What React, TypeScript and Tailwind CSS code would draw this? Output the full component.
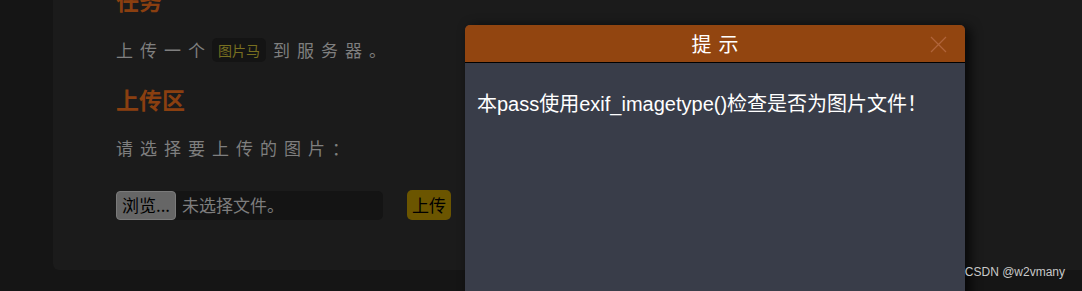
import React from "react";

const cjk = { fontFamily: '"Noto Sans CJK SC", "Noto Sans", sans-serif' };
const mixed = { fontFamily: '"Liberation Sans", "Noto Sans CJK SC", sans-serif' };

export default function App() {
  return (
    <div className="relative w-[1082px] h-[291px] overflow-hidden bg-[#151515]" style={cjk}>
      {/* page panel */}
      <div className="ml-[53px] h-[270px] bg-[#1b1b1b] rounded-bl-[6px] pl-[63px] flex flex-col">
        <h2 className="mt-[-15px] h-[30px] leading-[30px] text-[23px] font-bold text-[#8a3f10]">任务</h2>
        <div className="mt-[20px] h-[30px] flex items-center text-[17px] text-[#7f7f7f] tracking-[7px]">
          <span>上传一个</span>
          <span className="h-[24px] px-[6px] flex items-center rounded-[5px] bg-[#141414] text-[14px] text-[#786f20] tracking-normal">图片马</span>
          <span className="ml-[7px]">到服务器。</span>
        </div>
        <h2 className="mt-[19px] h-[30px] leading-[30px] text-[23px] font-bold text-[#8a3f10]">上传区</h2>
        <div className="mt-[19px] h-[30px] flex items-center text-[17px] text-[#7f7f7f] tracking-[7px]">请选择要上传的图片：</div>
        <div className="mt-[27px] flex items-center">
          <div className="w-[267px] h-[29px] flex items-center rounded-[5px] bg-[#141414]">
            <span className="h-[29px] w-[60px] flex items-center justify-center rounded-[4px] border border-[#7a7a7a] bg-[#666666] text-[17px] text-black">浏览...</span>
            <span className="ml-[6px] text-[17px] text-[#7d7d7d]">未选择文件。</span>
          </div>
          <span className="ml-[24px] h-[30px] px-[5px] flex items-center rounded-[5px] bg-[#6b5500] text-[17px] text-black">上传</span>
        </div>
      </div>

      {/* modal */}
      <div className="absolute left-[465px] top-[25px] w-[500px] h-[280px] rounded-t-[5px] bg-[#393d49] shadow-[5px_2px_12px_rgba(0,0,0,0.75)] overflow-hidden">
        <div className="relative h-[38px] bg-[#924510] border-b border-black flex items-center justify-center">
          <span className="text-[20px] text-white tracking-[7px] pl-[7px]">提示</span>
          <svg className="absolute right-[18px] top-[11px]" width="17" height="17" viewBox="0 0 17 17">
            <path d="M1 1 L16 16 M16 1 L1 16" stroke="#b0643a" strokeWidth="1.3" fill="none" />
          </svg>
        </div>
        <div className="pt-[28px] pl-[12px] text-[20px] leading-[26px] text-white" style={mixed}>
          本pass使用exif_imagetype()检查是否为图片文件！
        </div>
      </div>

      {/* watermark */}
      <div className="absolute right-[17px] bottom-[10px] text-[12px] text-[#c9c9c9]" style={mixed}>CSDN @w2vmany</div>
    </div>
  );
}
